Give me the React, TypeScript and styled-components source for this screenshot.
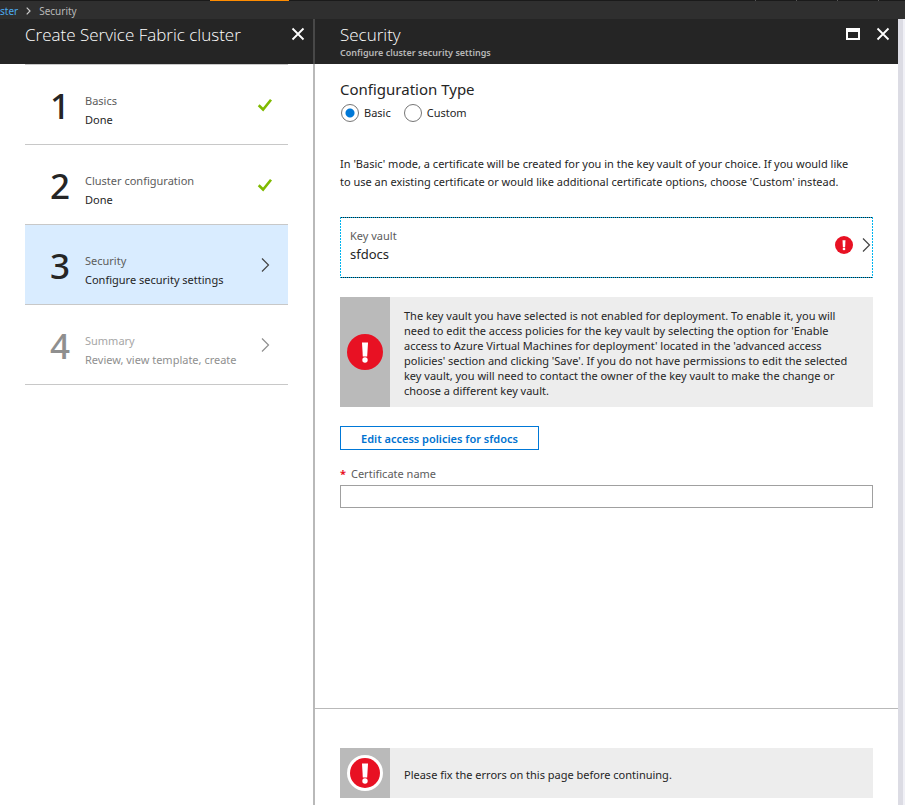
import React from "react";
import styled, { createGlobalStyle } from "styled-components";

const GlobalStyle = createGlobalStyle`
  *, *::before, *::after { box-sizing: border-box; }
  html, body { margin: 0; padding: 0; }
  body {
    background: #fff;
    color: #252525;
    font-family: "Noto Sans", "Open Sans", sans-serif;
    font-size: 11px;
    line-height: 18px;
  }
  button, input { font: inherit; color: inherit; }
  h1, h2, h3, p, ol { margin: 0; padding: 0; font-weight: 400; }
`;

const Page = styled.div`
  display: flex;
  flex-direction: column;
  min-height: 100vh;
`;

const TabStrip = styled.div`
  display: flex;
  height: 1px;
  padding-left: 210px;
  background: #1a1a1a;
`;

const ActiveTab = styled.div`
  width: 79px;
  background: #ff8c00;
`;

const ToolTicks = styled.div`
  display: flex;
  margin-left: auto;
`;

const Tick = styled.div<{ $last?: boolean }>`
  width: ${(p) => (p.$last ? 27 : 41)}px;
  border-left: 1px solid #555;
`;

const Breadcrumb = styled.nav`
  display: flex;
  align-items: center;
  height: 18px;
  padding-top: 2px;
  background: #2f2f2f;
  color: #b8b8b8;
  font-size: 10px;
`;

const CrumbLink = styled.a`
  color: #4cabed;
  text-decoration: none;
`;

const CrumbArrow = styled.svg`
  margin: 0 8px;
`;

const Blades = styled.div`
  display: flex;
  flex: 1;
`;

const Blade = styled.section<{ $fixed?: boolean }>`
  display: flex;
  flex-direction: column;
  flex: ${(p) => (p.$fixed ? "0 0 313px" : "1")};
  min-width: 0;
`;

const Divider = styled.div`
  width: 2px;
  background: linear-gradient(#484848 45px, #b9b9b9 45px);
`;

const Gutter = styled.div`
  width: 7px;
  background: #dcdce4;
  border-right: 2px solid #f0f0f6;
`;

const BladeHeader = styled.header`
  display: flex;
  height: 45px;
  padding: 4px 8px 0 25px;
  background: #252525;
  color: #fff;
`;

const Titles = styled.div`
  flex: 1;
  min-width: 0;
  white-space: nowrap;
`;

const Title = styled.h1`
  font-family: "Open Sans", "Noto Sans", sans-serif;
  font-size: 17px;
  font-weight: 300;
  line-height: 24px;
`;

const Subtitle = styled.p`
  font-size: 9px;
  line-height: 12px;
  font-weight: 600;
  color: #b8b8b8;
`;

const WindowButtons = styled.div`
  display: flex;
  align-items: flex-start;
  gap: 16px;
  padding-top: 4px;
`;

const IconButton = styled.button`
  display: flex;
  padding: 0;
  border: 0;
  background: none;
  color: #fff;
  cursor: pointer;
`;

const Steps = styled.ol`
  margin: 0 25px;
  border-top: 1px solid #c8c8c8;
  list-style: none;
`;

const Step = styled.li`
  border-bottom: 1px solid #c8c8c8;
`;

const StepButton = styled.button<{ $active?: boolean }>`
  display: flex;
  align-items: center;
  width: 100%;
  height: 79px;
  padding: 0 15px 0 25px;
  border: 0;
  background: ${(p) => (p.$active ? "#d9ecff" : "transparent")};
  color: #252525;
  text-align: left;
  cursor: pointer;

  &:disabled {
    color: #8f8f8f;
    cursor: default;
  }
`;

const StepNumber = styled.span`
  width: 35px;
  padding-top: 2px;
  font-size: 35px;
  line-height: 40px;
  font-weight: 500;
`;

const StepText = styled.span`
  flex: 1;
  padding-top: 11px;
  line-height: 19px;
  white-space: nowrap;
`;

const StepName = styled.span<{ $muted?: boolean }>`
  display: block;
  color: ${(p) => (p.$muted ? "#a6a6a6" : "#5c5c5c")};
`;

const Content = styled.div`
  flex: 1;
  padding: 15px 25px 0;
`;

const Fieldset = styled.fieldset`
  margin: 0;
  padding: 0;
  border: 0;
`;

const Legend = styled.legend`
  padding: 0;
  font-size: 15px;
  line-height: 20px;
`;

const Radios = styled.div`
  display: flex;
  gap: 13px;
  padding: 5px 0 0 1px;
`;

const RadioLabel = styled.label`
  display: flex;
  align-items: center;
  gap: 5px;
`;

const Radio = styled.input`
  appearance: none;
  width: 18px;
  height: 18px;
  margin: 0;
  border: 1px solid #767676;
  border-radius: 50%;
  background: #fff;

  &:checked {
    background: radial-gradient(circle, #0078d7 4px, #fff 5px);
  }
`;

const Intro = styled.p`
  margin-top: 33px;
  line-height: 18px;
`;

const Picker = styled.button`
  display: flex;
  align-items: center;
  width: 100%;
  height: 61px;
  margin-top: 26px;
  padding: 0 2px 6px 10px;
  border: 0;
  background:
    repeating-linear-gradient(90deg, #00b4f0 0 1px, #222 1px 2px) top / 100% 1px no-repeat,
    repeating-linear-gradient(90deg, #00b4f0 0 1px, #222 1px 2px) bottom / 100% 1px no-repeat,
    repeating-linear-gradient(#00b4f0 0 2px, #fff 2px 3px) left / 1px 100% no-repeat,
    repeating-linear-gradient(#00b4f0 0 2px, #fff 2px 3px) right / 1px 100% no-repeat;
  text-align: left;
  cursor: pointer;
`;

const PickerText = styled.span`
  flex: 1;
  line-height: 19px;
`;

const PickerLabel = styled.span`
  display: block;
  color: #5c5c5c;
`;

const PickerValue = styled.span`
  display: block;
  font-size: 13px;
`;

const PickerIcons = styled.span`
  display: flex;
  align-items: center;
  gap: 9px;
`;

const Notice = styled.div<{ $tall?: boolean }>`
  display: flex;
  min-height: ${(p) => (p.$tall ? 110 : 50)}px;
  margin-top: ${(p) => (p.$tall ? 19 : 0)}px;
  background: #ededed;
  line-height: 15px;
`;

const NoticeIcon = styled.div`
  display: flex;
  align-items: center;
  justify-content: center;
  width: 50px;
  background: #bababa;
`;

const NoticeText = styled.p`
  flex: 1;
  align-self: center;
  padding: 2px 0 0 14px;
`;

const OutlineButton = styled.button`
  display: block;
  height: 24px;
  margin-top: 19px;
  padding: 0 20px;
  border: 1px solid #0078d7;
  background: #fff;
  color: #0072d0;
  font-weight: 600;
  line-height: 24px;
  cursor: pointer;
`;

const FieldLabel = styled.label`
  display: block;
  margin-top: 15px;
  color: #5c5c5c;
`;

const Required = styled.span`
  margin-right: 5px;
  color: #e81123;
  font-weight: 700;
`;

const TextInput = styled.input`
  display: block;
  width: 100%;
  height: 23px;
  margin-top: 2px;
  padding: 0 8px;
  border: 1px solid #a0a0a0;
  background: #fff;
`;

const Footer = styled.footer`
  padding: 39px 25px 7px;
  border-top: 1px solid #b9b9b9;
`;

const CloseIcon = () => (
  <svg width="14" height="14" viewBox="0 0 14 14" aria-hidden="true">
    <path d="M1.5 1.5l11 11M12.5 1.5l-11 11" stroke="currentColor" strokeWidth="1.8" />
  </svg>
);

const MaximizeIcon = () => (
  <svg width="14" height="14" viewBox="0 0 14 14" aria-hidden="true">
    <path d="M0 1h14v12H0zM2 5v6h10V5z" fill="currentColor" fillRule="evenodd" />
  </svg>
);

const CheckIcon = () => (
  <svg width="16" height="14" viewBox="0 0 16 14" aria-hidden="true">
    <path d="M1.7 7.2l4.4 4.3L14 1.8" fill="none" stroke="#7fba00" strokeWidth="2.6" />
  </svg>
);

const ChevronIcon = ({ color = "#444" }: { color?: string }) => (
  <svg width="9" height="16" viewBox="0 0 9 16" aria-hidden="true">
    <path d="M1 1.5L7.5 8L1 14.5" fill="none" stroke={color} strokeWidth="1.2" />
  </svg>
);

const ErrorIcon = ({ size, ringed }: { size: number; ringed?: boolean }) => (
  <svg width={size} height={size} viewBox="0 0 36 36" aria-hidden="true">
    <circle cx="18" cy="18" r="18" fill={ringed ? "#fff" : "#e81123"} />
    {ringed && <circle cx="18" cy="18" r="15" fill="#e81123" />}
    <path d="M15 8.5h6l-.8 14h-4.4z" fill="#fff" />
    <circle cx="18" cy="26" r="2.7" fill="#fff" />
  </svg>
);

type StepState = "done" | "active" | "pending";

const steps: { name: string; detail: string; state: StepState }[] = [
  { name: "Basics", detail: "Done", state: "done" },
  { name: "Cluster configuration", detail: "Done", state: "done" },
  { name: "Security", detail: "Configure security settings", state: "active" },
  { name: "Summary", detail: "Review, view template, create", state: "pending" },
];

const StatusSlot = styled.span`
  display: flex;
  justify-content: center;
  width: 16px;
`;

export default function App() {
  return (
    <>
      <GlobalStyle />
      <Page>
        <TabStrip>
          <ActiveTab />
          <ToolTicks>
            <Tick />
            <Tick />
            <Tick />
            <Tick $last />
          </ToolTicks>
        </TabStrip>
        <Breadcrumb aria-label="Breadcrumb">
          <CrumbLink href="#cluster">ster</CrumbLink>
          <CrumbArrow width="5" height="8" viewBox="0 0 5 8" aria-hidden="true">
            <path d="M.7.7L4 4L.7 7.3" fill="none" stroke="#ccc" strokeWidth="1.2" />
          </CrumbArrow>
          <span>Security</span>
        </Breadcrumb>
        <Blades>
          <Blade $fixed>
            <BladeHeader>
              <Titles>
                <Title>Create Service Fabric cluster</Title>
              </Titles>
              <WindowButtons>
                <IconButton aria-label="Close wizard">
                  <CloseIcon />
                </IconButton>
              </WindowButtons>
            </BladeHeader>
            <Steps>
              {steps.map((step, i) => (
                <Step key={step.name}>
                  <StepButton $active={step.state === "active"} disabled={step.state === "pending"}>
                    <StepNumber>{i + 1}</StepNumber>
                    <StepText>
                      <StepName $muted={step.state === "pending"}>{step.name}</StepName>
                      {step.detail}
                    </StepText>
                    <StatusSlot>
                      {step.state === "done" ? (
                        <CheckIcon />
                      ) : (
                        <ChevronIcon color={step.state === "pending" ? "#8f8f8f" : "#444"} />
                      )}
                    </StatusSlot>
                  </StepButton>
                </Step>
              ))}
            </Steps>
          </Blade>
          <Divider />
          <Blade>
            <BladeHeader>
              <Titles>
                <Title>Security</Title>
                <Subtitle>Configure cluster security settings</Subtitle>
              </Titles>
              <WindowButtons>
                <IconButton aria-label="Maximize">
                  <MaximizeIcon />
                </IconButton>
                <IconButton aria-label="Close security settings">
                  <CloseIcon />
                </IconButton>
              </WindowButtons>
            </BladeHeader>
            <Content>
              <Fieldset>
                <Legend>Configuration Type</Legend>
                <Radios>
                  <RadioLabel>
                    <Radio type="radio" name="configuration" defaultChecked />
                    Basic
                  </RadioLabel>
                  <RadioLabel>
                    <Radio type="radio" name="configuration" />
                    Custom
                  </RadioLabel>
                </Radios>
              </Fieldset>
              <Intro>
                In 'Basic' mode, a certificate will be created for you in the key vault of your
                choice. If you would like
                <br />
                to use an existing certificate or would like additional certificate options, choose
                'Custom' instead.
              </Intro>
              <Picker>
                <PickerText>
                  <PickerLabel>Key vault</PickerLabel>
                  <PickerValue>sfdocs</PickerValue>
                </PickerText>
                <PickerIcons>
                  <ErrorIcon size={18} />
                  <ChevronIcon />
                </PickerIcons>
              </Picker>
              <Notice $tall role="alert">
                <NoticeIcon>
                  <ErrorIcon size={36} />
                </NoticeIcon>
                <NoticeText>
                  The key vault you have selected is not enabled for deployment. To enable it, you
                  will
                  <br />
                  need to edit the access policies for the key vault by selecting the option for
                  'Enable
                  <br />
                  access to Azure Virtual Machines for deployment' located in the 'advanced access
                  <br />
                  policies' section and clicking 'Save'. If you do not have permissions to edit the
                  selected
                  <br />
                  key vault, you will need to contact the owner of the key vault to make the change
                  or
                  <br />
                  choose a different key vault.
                </NoticeText>
              </Notice>
              <OutlineButton>Edit access policies for sfdocs</OutlineButton>
              <FieldLabel htmlFor="certificate-name">
                <Required>*</Required>
                Certificate name
              </FieldLabel>
              <TextInput id="certificate-name" type="text" required />
            </Content>
            <Footer>
              <Notice role="status">
                <NoticeIcon>
                  <ErrorIcon size={36} ringed />
                </NoticeIcon>
                <NoticeText>Please fix the errors on this page before continuing.</NoticeText>
              </Notice>
            </Footer>
          </Blade>
          <Gutter />
        </Blades>
      </Page>
    </>
  );
}
